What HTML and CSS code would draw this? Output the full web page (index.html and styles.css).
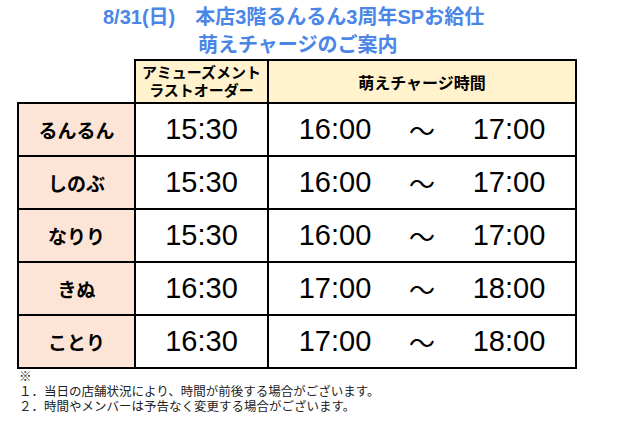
FILE: index.html
```html
<!DOCTYPE html>
<html lang="ja">
<head>
<meta charset="utf-8">
<link rel="stylesheet" href="styles.css">
</head>
<body>
<div class="title">
  <div class="l1">8/31(日)　本店3階るんるん3周年SPお給仕</div>
  <div class="l2">萌えチャージのご案内</div>
</div>
<table class="sched">
  <colgroup><col class="c1"><col class="c2"><col class="c3"></colgroup>
  <tr class="head">
    <td class="blank"></td>
    <td class="h h1">アミューズメント<br>ラストオーダー</td>
    <td class="h h2">萌えチャージ時間</td>
  </tr>
  <tr><td class="name">るんるん</td><td class="lo">15:30</td><td class="tm"><div class="range"><span>16:00</span><span class="til">〜</span><span>17:00</span></div></td></tr>
  <tr><td class="name">しのぶ</td><td class="lo">15:30</td><td class="tm"><div class="range"><span>16:00</span><span class="til">〜</span><span>17:00</span></div></td></tr>
  <tr><td class="name">なりり</td><td class="lo">15:30</td><td class="tm"><div class="range"><span>16:00</span><span class="til">〜</span><span>17:00</span></div></td></tr>
  <tr><td class="name">きぬ</td><td class="lo">16:30</td><td class="tm"><div class="range"><span>17:00</span><span class="til">〜</span><span>18:00</span></div></td></tr>
  <tr><td class="name">ことり</td><td class="lo">16:30</td><td class="tm"><div class="range"><span>17:00</span><span class="til">〜</span><span>18:00</span></div></td></tr>
</table>
<div class="notes">
  <div>※</div>
  <div>１．当日の店舗状況により、時間が前後する場合がございます。</div>
  <div>２．時間やメンバーは予告なく変更する場合がございます。</div>
</div>
</body>
</html>
```
FILE: styles.css
```css
body {
  margin: 0;
  background: #fff;
  font-family: "Liberation Sans", "Noto Sans CJK JP", sans-serif;
  color: #000;
}
.title {
  padding-top: 3px;
  color: #4a86e8;
  font-weight: bold;
  font-size: 20px;
  line-height: 28px;
  white-space: nowrap;
}
.title .l1 { padding-left: 103px; }
.title .l2 { padding-left: 198px; }

.sched {
  margin-left: 17px;
  border-collapse: collapse;
  table-layout: fixed;
  width: 558px;
}
.c1 { width: 117px; }
.c2 { width: 133px; }
.c3 { width: 308px; }
.sched td {
  border: 2px solid #000;
  padding: 0;
  text-align: center;
  vertical-align: middle;
}
.sched td.blank {
  border-top: none;
  border-left: none;
  background: #fff;
}
.head td { height: 41px; }
.h {
  background: #fff2cc;
  font-weight: bold;
  white-space: nowrap;
}
.h1 { font-size: 15px; line-height: 18px; }
.h2 { font-size: 16px; }
.sched tr:not(.head) td { height: 51px; }
.name {
  background: #fce4d6;
  font-weight: bold;
  font-size: 19px;
}
.lo {
  font-size: 29px;
}
.range {
  display: grid;
  grid-template-columns: 100px 74px 100px;
  justify-content: center;
  align-items: center;
  font-size: 29px;
}
.til {
  font-family: "Noto Sans CJK JP", sans-serif;
  font-size: 26px;
}
.notes {
  padding: 1px 0 0 19px;
  font-size: 12.5px;
  line-height: 15px;
  color: #222;
}
```
